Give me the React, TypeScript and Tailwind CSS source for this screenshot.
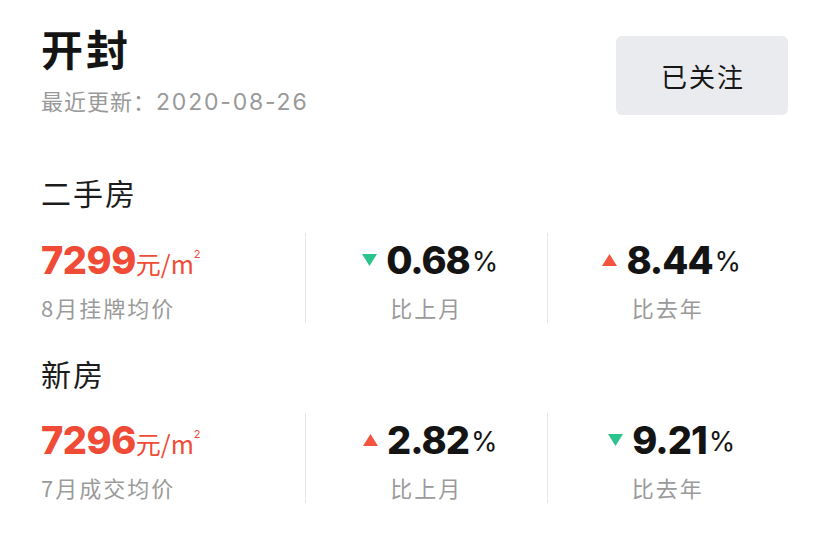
const cjk = "font-['Noto_Sans_CJK_SC',sans-serif]";
const num = "font-['Inter','Noto_Sans_CJK_SC',sans-serif]";

type Change = { dir: "up" | "down"; value: string; label: string };

function Arrow({ dir }: { dir: "up" | "down" }) {
    return (
        <svg width="15" height="12" viewBox="0 0 15 12" className="mr-[9px]">
            {dir === "up" ? (
                <polygon points="7.5,0 15,12 0,12" fill="#f25440" />
            ) : (
                <polygon points="0,0 15,0 7.5,12" fill="#2bc48c" />
            )}
        </svg>
    );
}

function ChangeCell({ item }: { item: Change }) {
    return (
        <div className="flex flex-col items-center border-l border-[#e6e6e6] pt-[5px]">
            <div className="flex items-center h-[44px] ml-[8px]">
                <Arrow dir={item.dir} />
                <span className={`${num} text-[38px] font-extrabold leading-[44px] text-[#141414] tracking-[-1px]`}>{item.value}</span>
                <span className={`${num} text-[27px] font-normal leading-[44px] text-[#141414] ml-[2px] mt-[4px]`}>%</span>
            </div>
            <div className={`${cjk} text-[22px] leading-[26px] tracking-[2px] text-[#9a9a9a] mt-[12px]`}>{item.label}</div>
        </div>
    );
}

function Section({ title, price, priceLabel, changes, first }: { title: string; price: string; priceLabel: string; changes: Change[]; first?: boolean }) {
    return (
        <div className={first ? "mt-[59px]" : "mt-[32px]"}>
            <div className={`${cjk} text-[30px] leading-[36px] tracking-[2px] text-[#1c1c1c]`}>{title}</div>
            <div className={`grid grid-cols-[264px_1fr_1fr] h-[90px] ${first ? "mt-[23px]" : "mt-[22px]"}`}>
                <div className="flex flex-col pt-[5px]">
                    <div className="flex items-baseline h-[44px]">
                        <span className={`${num} text-[38px] font-extrabold leading-[44px] text-[#f04b36] tracking-[-0.5px]`}>{price}</span>
                        <span className={`${cjk} text-[25px] leading-[44px] text-[#f04b36]`}>元/m</span>
                        <span className={`${num} text-[11px] text-[#f04b36] self-start mt-[8px]`}>2</span>
                    </div>
                    <div className={`${cjk} text-[22px] leading-[26px] tracking-[2px] text-[#9a9a9a] mt-[12px]`}>{priceLabel}</div>
                </div>
                {changes.map((c) => (
                    <ChangeCell key={c.label} item={c} />
                ))}
            </div>
        </div>
    );
}

export default function App() {
    return (
        <div className="w-[828px] h-[533px] bg-white pl-[41px] pr-[40px] overflow-hidden">
            <div className="flex justify-between">
                <div className="pt-[28px]">
                    <h1 className={`${cjk} text-[42px] font-bold leading-[40px] tracking-[3px] text-[#141414]`}>开封</h1>
                    <p className={`${cjk} text-[22px] leading-[24px] tracking-[1px] text-[#999999] mt-[20px]`}>
                        最近更新：<span className={`${num} text-[23px] tracking-[1.8px]`}>2020-08-26</span>
                    </p>
                </div>
                <button className={`${cjk} mt-[36px] w-[172px] h-[79px] rounded-[6px] bg-[#e9ebee] text-[26px] tracking-[2px] pl-[2px] text-[#161616]`}>
                    已关注
                </button>
            </div>

            <Section
                first
                title="二手房"
                price="7299"
                priceLabel="8月挂牌均价"
                changes={[
                    { dir: "down", value: "0.68", label: "比上月" },
                    { dir: "up", value: "8.44", label: "比去年" },
                ]}
            />
            <Section
                title="新房"
                price="7296"
                priceLabel="7月成交均价"
                changes={[
                    { dir: "up", value: "2.82", label: "比上月" },
                    { dir: "down", value: "9.21", label: "比去年" },
                ]}
            />
        </div>
    );
}
